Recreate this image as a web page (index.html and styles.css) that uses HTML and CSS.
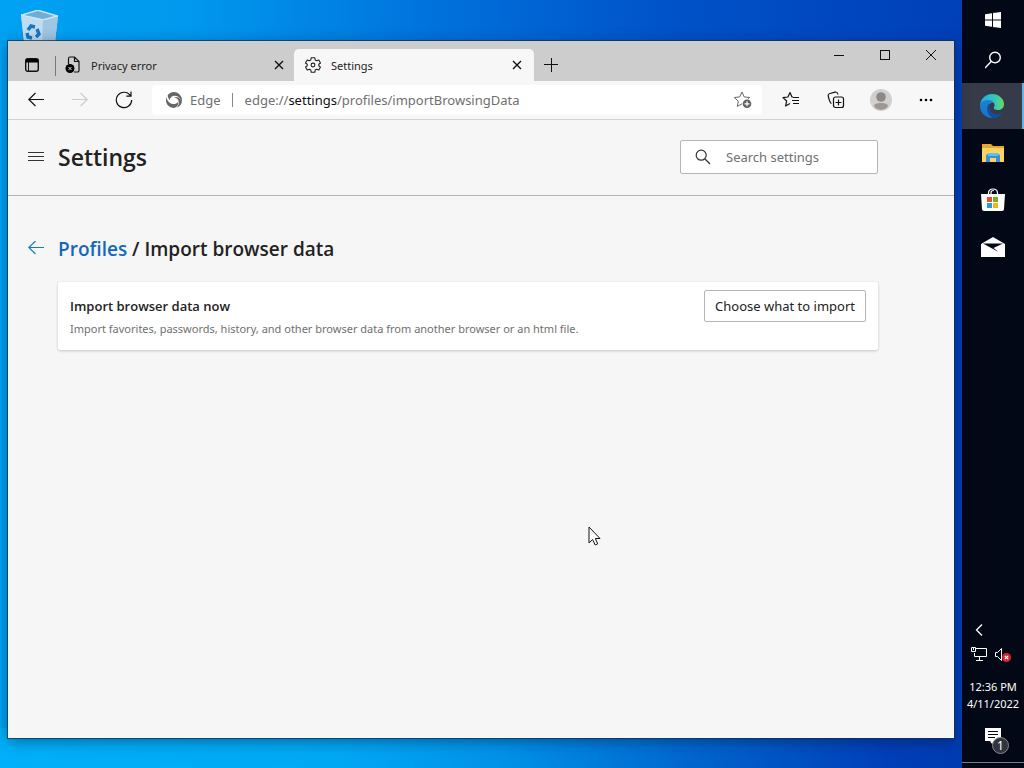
FILE: index.html
```html
<!DOCTYPE html>
<html lang="en">
<head>
<meta charset="utf-8">
<title>Settings</title>
<link rel="stylesheet" href="styles.css">
</head>
<body>
<main class="desktop">
  <svg class="recycle-bin" width="40" height="40" viewBox="0 0 40 40" aria-label="Recycle Bin">
    <path d="M1 5 18 0 38 6 34 40H5z" fill="#b9d9ef"/>
    <path d="M1 5 23 10 22 40H5z" fill="#c0dcf0"/>
    <path d="M23 10 38 6 34 40H22z" fill="#9fc6e3"/>
    <path d="M4 5 18 1 34 6 23 9z" fill="#6fadd5"/>
    <path d="M1 5 18 0 38 6 23 10z" fill="none" stroke="#d3e9f7"/>
    <g fill="none" stroke="#1476c4" stroke-width="3.4"><path d="M8 20l3-4 4 1"/><path d="M17 19l2 5-3 3"/><path d="M12 28l-4-1-1-4"/></g>
  </svg>
  <section class="window">
    <header class="tabstrip">
      <button class="tab-actions" aria-label="Tab actions"><svg width="16" height="16" viewBox="0 0 16 16"><rect x="1.7" y="1.7" width="12.6" height="12.6" rx="2" fill="none" stroke="#111" stroke-width="1.4"/><path d="M2 2h12v3.5H2z"/><path d="M4.5 5v9" stroke="#111"/></svg></button>
      <div class="tab">
        <svg width="16" height="18" viewBox="0 0 16 18"><path d="M3.5 8V2.5a1.5 1.5 0 0 1 1.500-1.500H9.500l4.500 4.500v9a1.500 1.500 0 0 1-1.500 1.500H9M9.500 1v4.500H14" fill="none" stroke="#111" stroke-width="1.2"/><circle cx="5" cy="12.500" r="4.500"/><path d="M3.500 11l3 3m0-3-3 3" stroke="#ddd"/></svg>
        <span class="tab-title">Privacy error</span>
        <button class="close" aria-label="Close tab"><svg width="10" height="10" viewBox="0 0 10 10"><path d="M1 1l8 8M9 1 1 9" stroke="#111" stroke-width="1.4"/></svg></button>
      </div>
      <div class="tab active">
        <svg width="16" height="16" viewBox="0 0 16 16" fill="none" stroke="#222" stroke-width="1.100" stroke-linejoin="round"><path d="M6.200 .7h3.600l.4 2.300 1.400.8 2.200-.8 1.700 3-1.700 1.300v1.500l1.700 1.300-1.700 3-2.200-.8-1.400.8-.4 2.200H6.200l-.4-2.200-1.400-.8-2.200.8-1.700-3 1.700-1.300V7.300L.5 6l1.700-3 2.200.8L5.800 3z"/><circle cx="8" cy="8" r="1.900"/></svg>
        <span class="tab-title">Settings</span>
        <button class="close" aria-label="Close tab"><svg width="10" height="10" viewBox="0 0 10 10"><path d="M1 1l8 8M9 1 1 9" stroke="#111" stroke-width="1.4"/></svg></button>
      </div>
      <button class="new-tab" aria-label="New tab"><svg width="14" height="14" viewBox="0 0 14 14"><path d="M7.500 0v14M0 6.500h14" stroke="#111"/></svg></button>
      <div class="captions">
        <button aria-label="Minimize"><svg width="12" height="12"><path d="M1 6.500h10" stroke="#111"/></svg></button>
        <button aria-label="Maximize"><svg width="12" height="12"><rect x="1.500" y="1.500" width="9" height="9" fill="none" stroke="#111"/></svg></button>
        <button aria-label="Close"><svg width="12" height="12"><path d="M1 1l10 10M11 1 1 11" stroke="#111"/></svg></button>
      </div>
    </header>
    <nav class="toolbar">
      <div class="nav-buttons">
        <button aria-label="Back"><svg width="16" height="16" viewBox="0 0 16 16" fill="none" stroke="#111" stroke-width="1.200"><path d="M16 7.500H.8M7.500 1 .8 7.500 7.500 14"/></svg></button>
        <button aria-label="Forward" disabled><svg width="16" height="16" viewBox="0 0 16 16" fill="none" stroke="#ccc" stroke-width="1.200"><path d="M0 7.500h15.200M8.500 1l6.700 6.500L8.500 14"/></svg></button>
        <button aria-label="Refresh"><svg width="18" height="18" viewBox="0 0 18 18" fill="none" stroke="#111" stroke-width="1.200"><path d="M15.500 4.800A7.700 7.700 0 1 0 16.700 9M16 .5v4.700h-4.700"/></svg></button>
      </div>
      <div class="address">
        <svg width="16" height="16" viewBox="0 0 16 16" fill="#666"><path d="M1.800 3C4.500-.5 10-1 13.300 2.200 16 4.800 16.500 8 15.500 10.500 15 7 12.500 3.800 8.800 3.800 6 3.800 4 5.500 3.800 8 2.500 6.500 1.500 5 1.800 3z"/><path d="M.8 5C.5 8 2.500 11 5.500 11.800 8.500 12.600 11 11.500 12 10c.8 2.500-.8 5.200-4 6C3.500 16-.8 12 .1 6.800z"/><path d="M7.500 5.500c3 0 5 1.800 5.300 4.500.2 2.500-.8 4.300-2.300 5.500 3-.8 4.800-2.800 5.200-5C15 7 12 3.500 7.500 5.500z"/></svg>
        <span class="scheme">Edge</span>
        <input aria-label="Address" class="visually-hidden" value="edge://settings/profiles/importBrowsingData">
        <span class="url">edge://<b>settings</b>/profiles/importBrowsingData</span>
        <button aria-label="Add to favorites"><svg width="18" height="18" viewBox="0 0 18 18"><path d="M8 1l2.200 4.900 5.300.6-4 3.700 1 5.200L8 12.800 3.300 15.400l1-5.200-4-3.700 5.400-.6z" fill="none" stroke="#666" stroke-linejoin="round"/><circle cx="13" cy="12.800" r="5" fill="#fff"/><circle cx="13" cy="12.800" r="4.300" fill="#606060"/><path d="M13 10.300v5M10.500 12.800h5" stroke="#fff" stroke-width="1.200"/></svg></button>
      </div>
      <div class="tools">
        <button aria-label="Favorites"><svg width="18" height="18" viewBox="0 0 18 18" fill="none" stroke="#111" stroke-width="1.200" stroke-linejoin="round"><path d="M11 6H10L8 1.500 5.900 6 1 6.600l3.600 3.400-1 5L8 12.500M11 6.500h6M10 9.500h7M11 12.500h6"/></svg></button>
        <button aria-label="Collections"><svg width="18" height="18" viewBox="0 0 18 18" fill="none" stroke="#111" stroke-width="1.200"><path d="M4.500 12.500C3 12 2.500 10 1.700 7 .8 4 1 3 3 2.500l5-1.300c2-.5 2.500.3 3 2.300"/><rect x="6.500" y="6" width="10" height="10.500" rx="2"/><path d="M11.500 8.500v6M8.500 11.500h6"/></svg></button>
        <button aria-label="Profile"><svg width="22" height="22" viewBox="0 0 22 22"><circle cx="11" cy="11" r="11" fill="#d2d0ce"/><circle cx="11" cy="8" r="4.800" fill="#8b8885"/><path d="M4 17c0-2 3-3 7-3s7 1 7 3c-1.500 2.500-4 3.800-7 3.800S5.500 19.500 4 17z" fill="#9b9895"/></svg></button>
        <button aria-label="More"><svg width="14" height="4"><circle cx="2" cy="2" r="1.300"/><circle cx="7" cy="2" r="1.300"/><circle cx="12" cy="2" r="1.300"/></svg></button>
      </div>
    </nav>
    <div class="page-header">
      <button class="menu" aria-label="Menu"><svg width="16" height="11" stroke="#333"><path d="M0 1.500h16M0 5.500h16M0 9.500h16"/></svg></button>
      <h1>Settings</h1>
      <label class="search"><svg width="16" height="16" viewBox="0 0 16 16" fill="none" stroke="#333" stroke-width="1.200"><circle cx="6.200" cy="6.200" r="5"/><path d="M10 10l5 5"/></svg><input type="text" placeholder="Search settings" aria-label="Search settings"></label>
    </div>
    <div class="content">
      <div class="crumbs">
        <button aria-label="Back to profiles"><svg width="16" height="16" viewBox="0 0 16 16" fill="none" stroke="#187bb8" stroke-width="1.200"><path d="M16 6.500H.8M7.500 0 .8 6.500 7.500 13"/></svg></button>
        <h2><a href="#profiles">Profiles</a> / Import browser data</h2>
      </div>
      <div class="card">
        <div><h3>Import browser data now</h3><p>Import favorites, passwords, history, and other browser data from another browser or an html file.</p></div>
        <button class="import">Choose what to import</button>
      </div>
    </div>
  </section>
  <svg class="cursor" width="14" height="20" viewBox="0 0 14 20"><path d="M1 1v16l3.600-3.500L7.200 19l2.500-1.200L7.300 12.500H12z" fill="#fff" stroke="#111"/></svg>
</main>
<aside class="taskbar">
  <button aria-label="Start"><svg width="16" height="16" viewBox="0 0 16 16" fill="#fff"><path d="M0 2.200 7 1.200v6.300H0zM8 1l8-1v7.500H8zM0 8.500h7v6.300l-7-1zM8 8.500h8V16l-8-1z"/></svg></button>
  <button aria-label="Search"><svg width="16" height="18" viewBox="0 0 16 18" fill="none" stroke="#fff" stroke-width="1.400"><circle cx="10" cy="6.500" r="5.300"/><path d="M6.200 10.500 0 17"/></svg></button>
  <button class="running" aria-label="Microsoft Edge"><svg width="24" height="24" viewBox="0 0 24 24"><defs><linearGradient id="top" x1="0" x2="1"><stop offset="0" stop-color="#25a9e4"/><stop offset=".6" stop-color="#35c4bd"/><stop offset="1" stop-color="#66dc63"/></linearGradient><linearGradient id="low" x1="0" y1="0" x2="0" y2="1"><stop offset="0" stop-color="#1a83d2"/><stop offset="1" stop-color="#1674c9"/></linearGradient></defs><path d="M0 11C1 4 6 0 12 0c7 0 12 5 12 10 0 4-3 6-6 6-3 0-5-1-4-3 2-3-1-6-5-6-4 0-8 2-9 4z" fill="url(#top)"/><path d="M0 12c0-4 4-6 8-6 2 0 5 1 6 3-3-1-5 1-5 4 0 5 4 8 8 8 2 0 4-1 5-2-2 3-6 5-10 5C5 24 0 18 0 12z" fill="url(#low)"/><path d="M8.500 10c-3 5-1 11 4 14 4 0 8-2 9.500-5-6 3-13 0-13-6 0-1 .4-2 1-3z" fill="#124e9d"/></svg></button>
  <button aria-label="File Explorer"><svg width="22" height="18" viewBox="0 0 22 18"><path d="M0 0h9l2 2h11v15H0z" fill="#e5a92e"/><path d="M0 4h22v14H0z" fill="#fcd462"/><path d="M4 18v-6q0-2 2-2h10q2 0 2 2v6h-4v-4H8v4z" fill="#3b8fd2"/><path d="M6 9h10v3H6z" fill="#63bdf0"/></svg></button>
  <button aria-label="Microsoft Store"><svg width="24" height="24" viewBox="0 0 24 24"><path d="M7.500 7V5q0-4 4.500-4t4.500 4v2M10 7V4.500q0-2 3-2" fill="none" stroke="#fff" stroke-width="1.200"/><path d="M0 6h24l-1 15q0 2-2 2H3q-2 0-2-2z" fill="#fff"/><path d="M6 9h5v5H6z" fill="#e7502d"/><path d="M12 9h5v5h-5z" fill="#76ae1c"/><path d="M6 15h5v5H6z" fill="#219edb"/><path d="M12 15h5v5h-5z" fill="#f2b51d"/></svg></button>
  <button aria-label="Mail"><svg width="24" height="20" viewBox="0 0 24 20"><path d="M0 7 12 0l12 7v13H0z" fill="#fff"/><path d="M2 6.500h20L12.500 11l5 4z" fill="#020816"/></svg></button>
  <div class="tray">
    <button class="chevron" aria-label="Show hidden icons"><svg width="8" height="12" fill="none" stroke="#fff" stroke-width="1.300"><path d="M7 .5 1.500 6 7 11.500"/></svg></button>
    <div class="status">
      <svg width="16" height="14" viewBox="0 0 16 14" fill="none" stroke="#fff"><path d="M5 1.500h10.500v8H3.500V6M8.500 10v3M5 13.500h7"/><path d="M.5.500h4v4h-4zM2.500 1v2"/></svg>
      <svg width="16" height="16" viewBox="0 0 16 16" fill="none" stroke="#fff"><path d="M.5 5.500h2l4-4v12l-4-4h-2z"/><circle cx="11.500" cy="10.500" r="4.500" fill="#cf2638" stroke="none"/><path d="M9.800 8.800l3.400 3.400m0-3.400-3.400 3.400" stroke-width="1.200"/></svg>
    </div>
    <time>12:36 PM<br>4/11/2022</time>
    <button class="notify" aria-label="Notifications"><svg width="16" height="17" viewBox="0 0 16 17"><path d="M0 0h16v13h-6l-3 3-2-3H0z" fill="#fff"/><path d="M3 3.500h10M3 6.500h10M3 9.500h7" stroke="#020816"/></svg><span class="badge">1</span></button>
  </div>
</aside>
</body>
</html>
```
FILE: styles.css
```css
* { box-sizing: border-box; }
body {
  margin: 0;
  min-height: 100vh;
  display: flex;
  font-family: "Noto Sans", "Open Sans", sans-serif;
  font-size: 13px;
  color: #222;
}
button { font: inherit; color: inherit; border: 0; background: none; padding: 0; display: flex; align-items: center; justify-content: center; }
svg { display: block; flex: none; }
h1, h2, h3, p { margin: 0; }
h1, h2, h3 { font-family: "Open Sans", "Noto Sans", sans-serif; font-weight: 600; }

.desktop {
  position: relative;
  flex: 1;
  display: flex;
  padding: 41px 8px 30px;
  background:
    linear-gradient(90deg, #00b0f8 0%, #00a8f4 35%, #0092e8 52%, #005fca 75%, #003fb8 92%, #003bb0 100%) bottom / 100% 40px no-repeat,
    linear-gradient(90deg, #00a2f3 0%, #0098ee 20%, #0072dc 45%, #0052c8 70%, #003fb8 100%);
}
.recycle-bin { position: absolute; left: 20px; top: 10px; }
.window {
  position: relative;
  flex: 1;
  display: flex;
  flex-direction: column;
  background: #f6f6f6;
  box-shadow: 0 0 0 1px rgba(20, 50, 75, .75), 0 3px 14px rgba(0, 20, 50, .45);
}
.cursor { position: absolute; left: 588px; top: 526px; }

.tabstrip { display: flex; height: 40px; background: #cdcdcd; font-size: 11px; }
.tab-actions { width: 48px; padding-top: 8px; }
.tab { display: flex; align-items: center; width: 238px; margin-top: 8px; padding: 0 10px 0 9px; position: relative; }
.tab:not(.active)::before { content: ""; position: absolute; left: -1px; top: 7px; width: 1px; height: 20px; background: #777; }
.tab-title { flex: 1; padding-left: 10px; }
.tab.active { width: 240px; background: #f7f7f7; border-radius: 5px 5px 0 0; padding: 0 12px 0 11px; }
.new-tab { width: 34px; padding-top: 8px; }
.captions { display: flex; margin-left: auto; height: 28px; }
.captions button { width: 46px; }

.toolbar { display: flex; align-items: center; height: 39px; background: #f7f7f7; border-bottom: 1px solid #d2d2d2; }
.nav-buttons { display: flex; padding-left: 6px; }
.nav-buttons button { width: 44px; height: 38px; }
.address { flex: 1; display: flex; align-items: center; height: 30px; margin-left: 6px; padding: 0 10px 0 14px; background: #fff; border-radius: 4px; color: #6f6f6f; }
.scheme { margin-left: 8px; padding-right: 11px; border-right: 1px solid #888; line-height: 14px; }
.url { flex: 1; padding-left: 12px; }
.url b { font-weight: 400; color: #111; }
.visually-hidden { position: absolute; width: 1px; height: 1px; padding: 0; border: 0; opacity: 0; }
.tools { display: flex; padding: 0 6px; }
.tools button { width: 45px; height: 38px; }

.page-header { display: flex; align-items: center; height: 76px; padding: 0 76px 2px 20px; border-bottom: 1px solid #b4b4b4; }
.menu { width: 16px; }
h1 { font-size: 23px; line-height: 32px; margin-left: 14px; }
.search { display: flex; align-items: center; width: 198px; height: 34px; margin-left: auto; padding: 0 14px; border: 1px solid #b5b5b5; border-radius: 2px; background: #fff; }
.search input { width: 100%; min-width: 0; margin-left: 15px; padding: 0; border: 0; outline: 0; font: inherit; background: none; }
.search input::placeholder { color: #707070; opacity: 1; }

.content { padding: 38px 76px 0 20px; }
.crumbs { display: flex; align-items: center; }
h2 { margin-left: 14px; font-size: 19px; line-height: 30px; }
h2 a { color: #1368bc; text-decoration: none; }
.card { display: flex; justify-content: space-between; align-items: flex-start; margin: 18px 0 0 30px; padding: 8px 12px 11px; background: #fff; border-radius: 3px; box-shadow: 0 1px 3px rgba(0, 0, 0, .2); }
h3 { margin-top: 6px; font-size: 13px; line-height: 20px; }
.card p { margin-top: 3px; font-size: 11px; line-height: 20px; color: #707070; }
.import { width: 162px; height: 32px; border: 1px solid #b5b5b5; border-radius: 2px; background: #fff; white-space: nowrap; }

.taskbar { width: 62px; display: flex; flex-direction: column; background: #020816; color: #fff; border-bottom: 5px solid #020816; }
.taskbar > button { height: 47px; }
.taskbar > button:first-child { height: 40px; }
.taskbar > button:nth-child(2) { height: 43px; padding-bottom: 3px; }
.taskbar > .running { height: 46px; background: #363b49; border-right: 2px solid #62b6e8; }
.tray { margin-top: auto; display: flex; flex-direction: column; border-bottom: 1px solid #777c86; }
.chevron { width: 34px; height: 24px; }
.status { display: flex; justify-content: space-between; padding: 5px 13px 0 9px; }
time { margin-top: 15px; font-size: 11px; line-height: 17px; text-align: center; }
.notify { position: relative; height: 50px; padding-bottom: 1px; }
.badge { position: absolute; left: 30px; top: 25px; width: 17px; height: 17px; border: 1px solid #888; border-radius: 50%; background: #303541; font-size: 12px; line-height: 15px; text-align: center; }
```
